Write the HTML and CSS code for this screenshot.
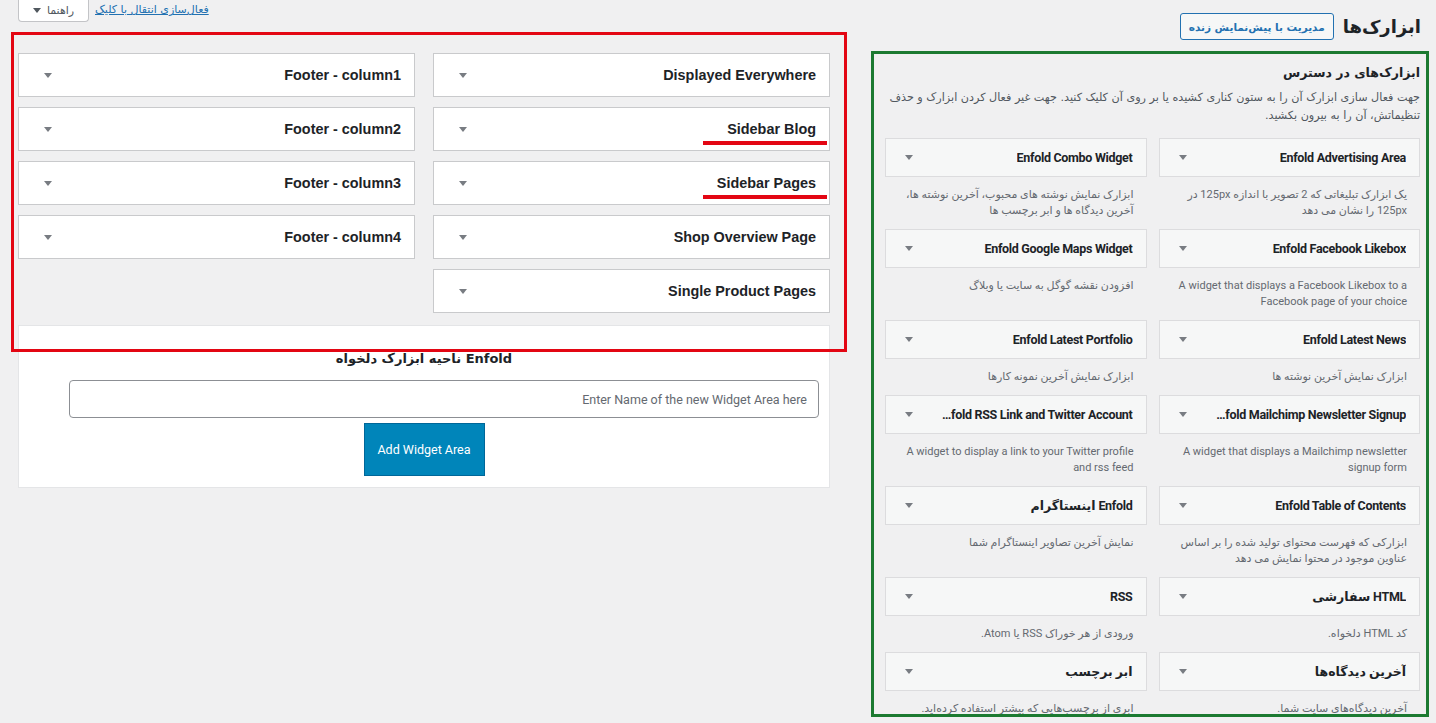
FILE: index.html
```html
<!DOCTYPE html>
<html lang="fa" dir="rtl">
<head>
<meta charset="utf-8">
<title>ابزارک‌ها</title>
<link rel="stylesheet" href="styles.css">
</head>
<body>
<div class="page">
  <header class="top">
    <div class="title-group">
      <h1 class="page-title">ابزارک‌ها</h1>
      <a class="live-btn" href="#">مدیریت با پیش‌نمایش زنده</a>
    </div>
    <div class="screen-meta">
      <a class="a11y-link" href="#">فعال‌سازی انتقال با کلیک</a>
      <span class="help-tab">راهنما <span class="caret"></span></span>
    </div>
  </header>

  <main class="columns">
    <section class="available">
      <h2 class="avail-title">ابزارک‌های در دسترس</h2>
      <p class="avail-desc">جهت فعال سازی ابزارک آن را به ستون کناری کشیده یا بر روی آن کلیک کنید. جهت غیر فعال کردن ابزارک و حذف تنظیماتش، آن را به بیرون بکشید.</p>
      <div class="widget-grid">
        <div class="widget"><div class="w-top"><span class="w-name">Enfold Advertising Area</span><span class="arrow"></span></div><p class="w-desc">یک ابزارک تبلیغاتی که 2 تصویر با اندازه 125px در 125px را نشان می دهد</p></div>
        <div class="widget"><div class="w-top"><span class="w-name">Enfold Combo Widget</span><span class="arrow"></span></div><p class="w-desc">ابزارک نمایش نوشته های محبوب، آخرین نوشته ها، آخرین دیدگاه ها و ابر برچسب ها</p></div>

        <div class="widget"><div class="w-top"><span class="w-name">Enfold Facebook Likebox</span><span class="arrow"></span></div><p class="w-desc">A widget that displays a Facebook Likebox to a Facebook page of your choice</p></div>
        <div class="widget"><div class="w-top"><span class="w-name">Enfold Google Maps Widget</span><span class="arrow"></span></div><p class="w-desc">افزودن نقشه گوگل به سایت یا وبلاگ</p></div>

        <div class="widget"><div class="w-top"><span class="w-name">Enfold Latest News</span><span class="arrow"></span></div><p class="w-desc">ابزارک نمایش آخرین نوشته ها</p></div>
        <div class="widget"><div class="w-top"><span class="w-name">Enfold Latest Portfolio</span><span class="arrow"></span></div><p class="w-desc">ابزارک نمایش آخرین نمونه کارها</p></div>

        <div class="widget"><div class="w-top"><span class="w-name"><bdi class="ltr">…fold Mailchimp Newsletter Signup</bdi></span><span class="arrow"></span></div><p class="w-desc">A widget that displays a Mailchimp newsletter signup form</p></div>
        <div class="widget"><div class="w-top"><span class="w-name"><bdi class="ltr">…fold RSS Link and Twitter Account</bdi></span><span class="arrow"></span></div><p class="w-desc">A widget to display a link to your Twitter profile and rss feed</p></div>

        <div class="widget"><div class="w-top"><span class="w-name">Enfold Table of Contents</span><span class="arrow"></span></div><p class="w-desc">ابزارکی که فهرست محتوای تولید شده را بر اساس عناوین موجود در محتوا نمایش می دهد</p></div>
        <div class="widget"><div class="w-top"><span class="w-name">Enfold اینستاگرام</span><span class="arrow"></span></div><p class="w-desc">نمایش آخرین تصاویر اینستاگرام شما</p></div>

        <div class="widget"><div class="w-top"><span class="w-name">HTML سفارشی</span><span class="arrow"></span></div><p class="w-desc">کد HTML دلخواه.</p></div>
        <div class="widget"><div class="w-top"><span class="w-name">RSS</span><span class="arrow"></span></div><p class="w-desc">ورودی از هر خوراک RSS یا Atom.</p></div>

        <div class="widget"><div class="w-top"><span class="w-name">آخرین دیدگاه‌ها</span><span class="arrow"></span></div><p class="w-desc">آخرین دیدگاه‌های سایت شما.</p></div>
        <div class="widget"><div class="w-top"><span class="w-name">ابر برچسب</span><span class="arrow"></span></div><p class="w-desc">ابری از برچسب‌هایی که بیشتر استفاده کرده‌اید.</p></div>
      </div>
    </section>

    <section class="areas">
      <div class="areas-grid">
        <div class="area-col">
          <div class="area"><span class="area-name">Displayed Everywhere</span><span class="arrow"></span></div>
          <div class="area"><span class="area-name">Sidebar Blog</span><span class="arrow"></span><span class="mark"></span></div>
          <div class="area"><span class="area-name">Sidebar Pages</span><span class="arrow"></span><span class="mark"></span></div>
          <div class="area"><span class="area-name">Shop Overview Page</span><span class="arrow"></span></div>
          <div class="area"><span class="area-name">Single Product Pages</span><span class="arrow"></span></div>
        </div>
        <div class="area-col">
          <div class="area"><span class="area-name">Footer - column1</span><span class="arrow"></span></div>
          <div class="area"><span class="area-name">Footer - column2</span><span class="arrow"></span></div>
          <div class="area"><span class="area-name">Footer - column3</span><span class="arrow"></span></div>
          <div class="area"><span class="area-name">Footer - column4</span><span class="arrow"></span></div>
        </div>
      </div>
      <div class="custom-area">
        <h3 class="custom-title">Enfold ناحیه ابزارک دلخواه</h3>
        <input class="custom-input" type="text" placeholder="Enter Name of the new Widget Area here">
        <button class="add-btn" type="button">Add Widget Area</button>
      </div>
      <div class="annot-red"></div>
    </section>
  </main>
</div>
</body>
</html>
```

FILE: styles.css
```css
* { box-sizing: border-box; }

html, body {
  margin: 0;
  padding: 0;
}

body {
  direction: rtl;
  background: #f0f0f1;
  color: #1d2327;
  font-family: Roboto, "DejaVu Sans", sans-serif;
  font-size: 13px;
  width: 1436px;
  height: 723px;
  overflow: hidden;
}

.page {
  width: 1436px;
}

/* header */
.top {
  height: 51px;
  display: flex;
  justify-content: space-between;
  align-items: flex-start;
  padding: 0 15px 0 18px;
}

.title-group {
  display: flex;
  align-items: center;
  gap: 9px;
  margin-top: 13px;
}

.page-title {
  margin: 0;
  font-size: 18px;
  line-height: 27px;
  font-weight: 700;
  font-family: "DejaVu Sans", sans-serif;
  color: #1d2327;
}

.live-btn {
  display: inline-flex;
  align-items: center;
  height: 27px;
  padding: 0 8px;
  border: 1px solid #2271b1;
  border-radius: 3px;
  background: #f6f7f7;
  color: #2271b1;
  text-decoration: none;
  font-size: 10.5px;
  font-weight: 700;
  font-family: "DejaVu Sans", sans-serif;
}

.screen-meta {
  display: flex;
  align-items: flex-start;
  gap: 6px;
}

.a11y-link {
  margin-top: 2px;
  color: #2271b1;
  font-size: 11px;
  line-height: 16px;
  text-decoration: underline;
  font-family: "DejaVu Sans", sans-serif;
}

.help-tab {
  display: inline-flex;
  align-items: center;
  justify-content: center;
  gap: 6px;
  width: 71px;
  height: 22px;
  background: #fff;
  border: 1px solid #c3c4c7;
  border-top: none;
  border-radius: 0 0 4px 4px;
  color: #50575e;
  font-size: 11px;
  font-family: "DejaVu Sans", sans-serif;
}

.caret {
  width: 0;
  height: 0;
  border-left: 4px solid transparent;
  border-right: 4px solid transparent;
  border-top: 5px solid #50575e;
}

/* main columns */
.columns {
  display: flex;
  gap: 41px;
  padding: 0 7px 0 18px;
}

.available {
  width: 558px;
  height: 666px;
  flex: none;
  border: 3px solid #1c7a31;
  padding: 10px 6px 0 11px;
  overflow: hidden;
}

.avail-title {
  margin: 0;
  font-size: 12.5px;
  line-height: 18px;
  font-weight: 700;
  font-family: "DejaVu Sans", sans-serif;
  color: #1d2327;
}

.avail-desc {
  margin: 7px 0 0 -9px;
  font-size: 11.2px;
  line-height: 18px;
  color: #50575e;
  font-family: "DejaVu Sans", sans-serif;
}

.widget-grid {
  margin-top: 13px;
  display: grid;
  grid-template-columns: 1fr 1fr;
  column-gap: 12px;
}

.w-top {
  height: 39px;
  display: flex;
  align-items: center;
  justify-content: space-between;
  padding: 0 13px 0 19px;
  background: #f6f7f7;
  border: 1px solid #dcdcde;
}

.w-name {
  font-weight: 700;
  font-size: 12.5px;
  letter-spacing: -0.3px;
  white-space: nowrap;
  overflow: hidden;
  color: #1d2327;
}

.ltr {
  direction: ltr;
  unicode-bidi: isolate;
}

.arrow {
  flex: none;
  width: 0;
  height: 0;
  border-left: 4px solid transparent;
  border-right: 4px solid transparent;
  border-top: 5px solid #787c82;
}

.w-desc {
  margin: 0;
  padding: 10px 13px 10px 13px;
  font-size: 11px;
  line-height: 16px;
  color: #646970;
}

/* widget areas */
.areas {
  flex: 1;
  position: relative;
  padding-top: 2px;
}

.areas-grid {
  display: grid;
  grid-template-columns: 1fr 1fr;
  column-gap: 18px;
  margin-bottom: 2px;
}

.area {
  position: relative;
  height: 44px;
  margin-bottom: 10px;
  display: flex;
  align-items: center;
  justify-content: space-between;
  padding: 0 13px 0 25px;
  background: #fff;
  border: 1px solid #c9cacc;
}

.area-name {
  font-family: "Liberation Sans", Arial, sans-serif;
  font-weight: 700;
  font-size: 14.4px;
  color: #1d2327;
}

.mark {
  position: absolute;
  left: 269px;
  top: 33px;
  width: 124px;
  height: 4px;
  background: #e30613;
}

.custom-area {
  background: #fff;
  border: 1px solid #e4e5e7;
  padding: 24px 10px 11px 10px;
  text-align: center;
}

.custom-title {
  margin: 0;
  font-size: 13px;
  line-height: 17px;
  font-weight: 700;
  font-family: "DejaVu Sans", sans-serif;
  color: #1d2327;
}

.custom-input {
  display: block;
  width: calc(100% - 40px);
  height: 38px;
  margin: 13px 0 0 0;
  padding: 0 11px;
  border: 1px solid #8c8f94;
  border-radius: 4px;
  background: #fff;
  font-family: Roboto, sans-serif;
  font-size: 12.5px;
  direction: rtl;
  text-align: right;
}

.custom-input::placeholder {
  color: #646970;
}

.add-btn {
  display: block;
  width: 121px;
  height: 53px;
  margin: 5px auto 0;
  background: #0085ba;
  border: 1px solid #006799;
  border-radius: 0;
  color: #fff;
  font-family: Roboto, sans-serif;
  font-size: 12.5px;
}

.annot-red {
  position: absolute;
  top: -19px;
  left: -7px;
  width: 836px;
  height: 320px;
  border: 3px solid #e30613;
  pointer-events: none;
}
```
